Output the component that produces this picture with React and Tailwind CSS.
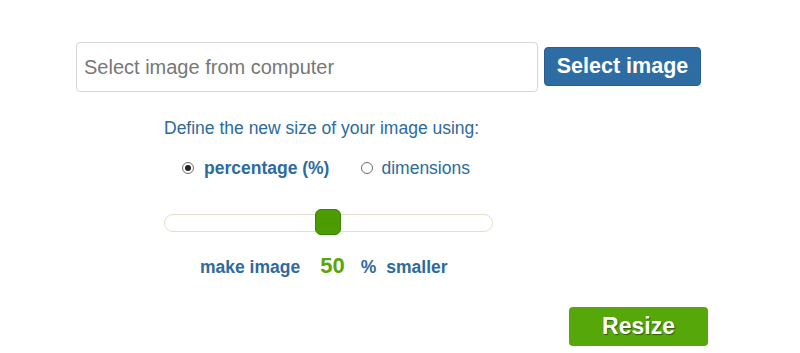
import React, { useState } from 'react';

const Radio = ({ checked }) => (
  <span className="inline-flex w-[12px] h-[12px] rounded-full border border-[#6b6b6b] bg-white items-center justify-center">
    {checked && <span className="w-[6px] h-[6px] rounded-full bg-[#222]"></span>}
  </span>
);

const App = () => {
  const [percent] = useState(50);

  return (
    <div className="w-[800px] h-[353px] bg-white overflow-hidden font-['Liberation_Sans',Arial,sans-serif]">
      {/* File picker */}
      <div className="flex items-start pt-[42px] pl-[76px]">
        <div className="w-[462px] h-[50px] border border-[#d6d6d6] rounded-[4px] flex items-center pl-[7px] text-[20px] text-[#777]">
          Select image from computer
        </div>
        <button className="ml-[6px] mt-[5px] w-[157px] h-[39px] rounded-[4px] bg-[#2e6da4] border border-[#285f8f] text-white font-bold text-[21.5px] leading-none">
          Select image
        </button>
      </div>

      {/* Options */}
      <div className="mt-[26px] pl-[164px] text-[17.5px] leading-[20px] text-[#2d6a9e]">
        Define the new size of your image using:
      </div>

      <div className="mt-[20px] pl-[182px] flex items-center text-[17.5px] leading-[20px] text-[#2d6a9e]">
        <Radio checked />
        <span className="ml-[10px] font-bold">percentage (%)</span>
        <span className="ml-[32px]"><Radio /></span>
        <span className="ml-[8px]">dimensions</span>
      </div>

      {/* Slider */}
      <div className="mt-[31px] ml-[164px] w-[329px] h-[26px] relative">
        <div className="absolute left-0 right-0 top-[5px] h-[18px] rounded-[9px] border border-[#e3dfcc] bg-white"></div>
        <div
          className="absolute top-0 w-[26px] h-[26px] rounded-[6px] bg-[#4a9c00] border border-[#3d8200]"
          style={{ left: `${(percent / 100) * 301}px` }}
        ></div>
      </div>

      <div className="mt-[19px] pl-[200px] flex items-baseline leading-[24px] font-bold text-[#2d6a9e]">
        <span className="text-[17.5px]">make image</span>
        <span className="ml-[20px] text-[22px] text-[#5aa60a]">{percent}</span>
        <span className="ml-[16px] text-[17.5px]">%</span>
        <span className="ml-[10px] text-[17.5px]">smaller</span>
      </div>

      <div className="mt-[28px] pl-[569px]">
        <button className="w-[139px] h-[39px] rounded-[4px] bg-[#55a70a] text-white font-bold text-[23px] leading-none [text-shadow:1px_1px_1px_rgba(0,0,0,0.45)]">
          Resize
        </button>
      </div>
    </div>
  );
};

export default App;
